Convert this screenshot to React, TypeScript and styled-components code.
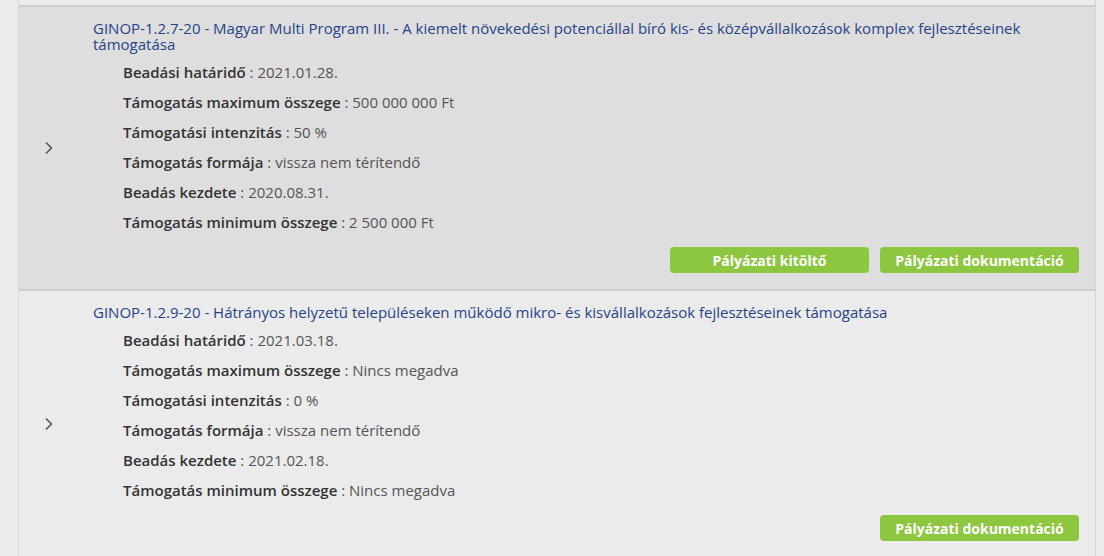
import styled, { createGlobalStyle } from "styled-components";
import { ChevronRight } from "lucide-react";

const GlobalStyle = createGlobalStyle`
    html, body {
        margin: 0;
        padding: 0;
        background-color: #ebebeb;
        font-family: "Open Sans", "DejaVu Sans", sans-serif;
    }
`;

type Field = {
    label: string;
    value: string;
};

type Grant = {
    id: string;
    title: string;
    fields: Field[];
    hasForm: boolean;
    active?: boolean;
};

const grants: Grant[] = [
    {
        id: "ginop-127",
        title: "GINOP-1.2.7-20 - Magyar Multi Program III. - A kiemelt növekedési potenciállal bíró kis- és középvállalkozások komplex fejlesztéseinek támogatása",
        fields: [
            { label: "Beadási határidő", value: "2021.01.28." },
            { label: "Támogatás maximum összege", value: "500 000 000 Ft" },
            { label: "Támogatási intenzitás", value: "50 %" },
            { label: "Támogatás formája", value: "vissza nem térítendő" },
            { label: "Beadás kezdete", value: "2020.08.31." },
            { label: "Támogatás minimum összege", value: "2 500 000 Ft" },
        ],
        hasForm: true,
        active: true,
    },
    {
        id: "ginop-129",
        title: "GINOP-1.2.9-20 - Hátrányos helyzetű településeken működő mikro- és kisvállalkozások fejlesztéseinek támogatása",
        fields: [
            { label: "Beadási határidő", value: "2021.03.18." },
            { label: "Támogatás maximum összege", value: "Nincs megadva" },
            { label: "Támogatási intenzitás", value: "0 %" },
            { label: "Támogatás formája", value: "vissza nem térítendő" },
            { label: "Beadás kezdete", value: "2021.02.18." },
            { label: "Támogatás minimum összege", value: "Nincs megadva" },
        ],
        hasForm: false,
    },
];

const Page = styled.div`
    padding: 0 8px 0 18px;
`;

const List = styled.div`
    background-color: #ececec;
    border-left: 1px solid #d9d9d9;
    border-right: 1px solid #d4d4d4;
    padding-top: 5px;
`;

const Item = styled.div<{ active?: boolean }>`
    display: flex;
    background-color: ${props => props.active ? '#dedede' : '#ebebeb'};
    border-top: 2px solid #cccccc;
`;

const Toggle = styled.div`
    width: 59px;
    flex-shrink: 0;
    display: flex;
    align-items: center;
    justify-content: center;
    color: #555;
`;

const Content = styled.div`
    flex: 1;
    padding: 13px 16px 16px 15px;
`;

const Title = styled.a`
    display: block;
    font-size: 15px;
    line-height: 16px;
    color: #26448a;
    text-decoration: none;
    cursor: pointer;
`;

const Fields = styled.div`
    margin-top: 5px;
    padding-left: 30px;
`;

const FieldRow = styled.div`
    font-size: 15px;
    line-height: 30px;
    color: #555;
`;

const FieldLabel = styled.span`
    font-weight: 600;
    color: #333;
`;

const Actions = styled.div`
    display: flex;
    justify-content: flex-end;
    gap: 11px;
    margin-top: 10px;
`;

const ActionButton = styled.button`
    width: 199px;
    height: 26px;
    border: 0;
    border-radius: 4px;
    background-color: #8dc63f;
    color: #fff;
    font-family: inherit;
    font-size: 14px;
    font-weight: 700;
    cursor: pointer;
`;

const GrantItem = ({ grant }: { grant: Grant }) => (
    <Item active={grant.active}>
        <Toggle>
            <ChevronRight size={20} strokeWidth={2} />
        </Toggle>
        <Content>
            <Title>{grant.title}</Title>
            <Fields>
                {grant.fields.map(f => (
                    <FieldRow key={f.label}>
                        <FieldLabel>{f.label}</FieldLabel> : {f.value}
                    </FieldRow>
                ))}
            </Fields>
            <Actions>
                {grant.hasForm ? <ActionButton>Pályázati kitöltő</ActionButton> : null}
                <ActionButton>Pályázati dokumentáció</ActionButton>
            </Actions>
        </Content>
    </Item>
);

export default function App() {
    return <>
        <GlobalStyle />
        <Page>
            <List>
                {grants.map(g => <GrantItem key={g.id} grant={g} />)}
            </List>
        </Page>
    </>;
}
